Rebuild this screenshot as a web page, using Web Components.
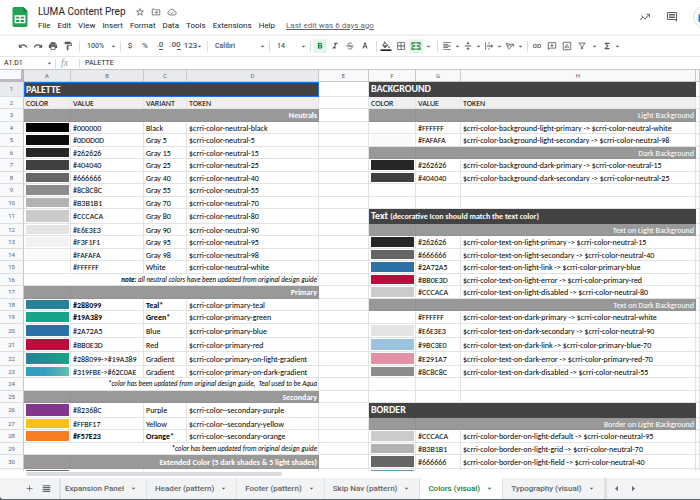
<!DOCTYPE html>
<html lang="en">
<head>
<meta charset="utf-8">
<title>LUMA Content Prep</title>
<style>
  html, body { height: 100%; }
  body {
    margin: 0;
    background: #5f6368;
    color: #202124;
    font: 8px/10px Roboto, "Liberation Sans", sans-serif;
    overflow: hidden;
  }
</style>
</head>
<body>
<sheets-app>
  <doc-header slot="header" name="LUMA Content Prep"></doc-header>
  <tool-bar slot="toolbar"></tool-bar>
  <formula-bar slot="formula" cell="A1:D1" value="PALETTE"></formula-bar>
  <sheet-grid></sheet-grid>
  <sheet-tabs slot="tabs">
    <sheet-tab>Expansion Panel</sheet-tab>
    <sheet-tab>Header (pattern)</sheet-tab>
    <sheet-tab>Footer (pattern)</sheet-tab>
    <sheet-tab>Skip Nav (pattern)</sheet-tab>
    <sheet-tab active>Colors (visual)</sheet-tab>
    <sheet-tab>Typography (visual)</sheet-tab>
  </sheet-tabs>
</sheets-app>

<script>
const stroke = 'fill="none" stroke="currentColor" stroke-width="2"';

const icons = {
  star: '<path d="M22 9.24l-7.19-.62L12 2 9.19 8.63 2 9.24l5.46 4.73L5.82 21 12 17.27 18.18 21l-1.63-7.03L22 9.24zM12 15.4l-3.76 2.27 1-4.28-3.32-2.88 4.38-.38L12 6.1l1.71 4.04 4.38.38-3.32 2.88 1 4.28L12 15.4z"/>',
  move: `<path ${stroke} d="M3 5h6l2 2h10v12H3zM8 13h7M12.500 9.500l3.500 3.500-3.500 3.500"/>`,
  cloud: `<path ${stroke} d="M7 19a5 5 0 0 1-.8-9.900 6.500 6.500 0 0 1 12.200 1.400A4.300 4.300 0 0 1 18.500 19zM8.500 13.500l2.500 2.500 4.500-4.500"/>`,
  trend: `<path ${stroke} d="M2 18l6-6 4 4 8-9M15 6.500h6v6M5 9l3 3"/>`,
  comments: '<path d="M22 4c0-1.100-.9-2-2-2H4c-1.100 0-2 .9-2 2v12c0 1.100.9 2 2 2h14l4 4zM20 4v13.170L18.830 16H4V4zM6 12h12v2H6zm0-3h12v2H6zm0-3h12v2H6z"/>',
  undo: '<path d="M12.500 8c-2.650 0-5.050.99-6.900 2.600L2 7v9h9l-3.620-3.620c1.390-1.160 3.160-1.880 5.120-1.880 3.540 0 6.550 2.310 7.600 5.500l2.370-.78C21.080 11.030 17.150 8 12.500 8z"/>',
  redo: '<path d="M18.400 10.600C16.550 8.990 14.150 8 11.500 8c-4.650 0-8.580 3.030-9.960 7.220L3.900 16c1.050-3.190 4.050-5.500 7.600-5.500 1.950 0 3.730.72 5.120 1.880L13 16h9V7l-3.600 3.600z"/>',
  print: '<path d="M19 8H5c-1.660 0-3 1.340-3 3v6h4v4h12v-4h4v-6c0-1.660-1.340-3-3-3zm-3 11H8v-5h8v5zm3-7c-.55 0-1-.45-1-1s.45-1 1-1 1 .45 1 1-.45 1-1 1zm-1-9H6v4h12V3z"/>',
  paint: '<path d="M18 4V3c0-.55-.45-1-1-1H5c-.55 0-1 .45-1 1v4c0 .55.45 1 1 1h12c.55 0 1-.45 1-1V6h1v4H9v11c0 .55.45 1 1 1h2c.55 0 1-.45 1-1v-9h8V4h-3z"/>',
  bold: '<path d="M15.600 10.790c.97-.67 1.650-1.770 1.650-2.790 0-2.260-1.750-4-4-4H7v14h7.040c2.090 0 3.710-1.700 3.710-3.790 0-1.520-.86-2.820-2.150-3.420zM10 6.500h3c.83 0 1.500.67 1.500 1.500s-.67 1.500-1.500 1.500h-3v-3zm3.500 9H10v-3h3.500c.83 0 1.500.67 1.500 1.500s-.67 1.500-1.500 1.500z"/>',
  italic: '<path d="M10 4v3h2.210l-3.420 8H6v3h8v-3h-2.210l3.420-8H18V4z"/>',
  strike: `<path ${stroke} d="M16.500 7.500C16 5.500 14.300 4.500 12 4.500c-2.600 0-4.500 1.300-4.500 3.200S9 10.300 12 11.500M12 12.500c3 .8 4.800 1.600 4.800 3.800 0 2-2 3.200-4.600 3.200-2.700 0-4.700-1.300-5-3.500M3 12h18"/>`,
  textcolor: '<path d="M11 3L5.500 18h2.700l1.100-3.200h5.400l1.100 3.200h2.700L13 3h-2zm-.9 9.500L12 6.900l1.900 5.600h-3.800z"/>',
  fill: '<path d="M16.560 8.940L7.620 0 6.210 1.410l2.380 2.380-5.150 5.150c-.59.59-.59 1.540 0 2.120l5.500 5.500c.29.290.68.440 1.060.440s.77-.15 1.060-.44l5.500-5.500c.59-.58.59-1.530 0-2.120zM5.210 10L10 5.210 14.790 10H5.210zM19 11.500s-2 2.170-2 3.500c0 1.100.9 2 2 2s2-.9 2-2c0-1.330-2-3.500-2-3.500z"/><path d="M-1 20h26v4H-1z" fill="#202124"/>',
  borders: '<path d="M3 3v18h18V3H3zm8 16H5v-6h6v6zm0-8H5V5h6v6zm8 8h-6v-6h6v6zm0-8h-6V5h6v6z"/>',
  merge: '<path d="M1 3h10v3H4v3H1zM13 3h10v6h-3V6h-7zM1 15h3v3h7v3H1zM20 15h3v6H13v-3h7zM1 11h5V8.500l5 3.500-5 3.500V13H1zM23 11h-5V8.500L13 12l5 3.500V13h5z"/>',
  align: '<path d="M3 3h18v2H3zm0 4h12v2H3zm0 4h18v2H3zm0 4h12v2H3zm0 4h18v2H3z"/>',
  valign: '<path d="M4 11h16v2H4zM11 1h2v4h3l-4 4-4-4h3zM11 23h2v-4h3l-4-4-4 4h3z"/>',
  wrap: '<path d="M3 3h2v18H3zM11 3h2v5h-2zM11 16h2v5h-2zM7 11h10V8l5 4-5 4v-3H7z"/>',
  rotate: `<path ${stroke} d="M3 5l13 5M3 5l5 13M6 13l7-5M9 20L20 8M15 7.500h5.500V13"/>`,
  link: '<path d="M3.900 12c0-1.710 1.390-3.100 3.100-3.100h4V7H7c-2.760 0-5 2.240-5 5s2.240 5 5 5h4v-1.900H7c-1.710 0-3.100-1.390-3.100-3.100zM8 13h8v-2H8v2zm9-6h-4v1.900h4c1.710 0 3.100 1.390 3.100 3.100s-1.390 3.100-3.100 3.100h-4V17h4c2.760 0 5-2.240 5-5s-2.240-5-5-5z"/>',
  addcomment: `<path ${stroke} d="M3 4h18v13H7l-4 4zM12 7v7M8.500 10.500h7"/>`,
  chart: `<path ${stroke} d="M3 3h18v18H3zM8 17v-6M12 17V7M16 17v-4"/>`,
  filter: `<path ${stroke} d="M4.500 5h15L13.500 12.500V19h-3v-6.500z"/>`,
  sigma: '<path d="M18 4H6v2l6.500 6L6 18v2h12v-3h-7l5-5-5-5h7z"/>',
  plus: '<path d="M20 13h-7v7h-2v-7H4v-2h7V4h2v7h7z"/>',
  list: '<path d="M2 3h20v3H2zm0 5h20v3H2zm0 5h20v3H2zm0 5h20v3H2z"/>',
  caret: '<path d="M3 8l9 9 9-9z"/>',
  prev: '<path d="M17 3L7 12l10 9z"/>',
  next: '<path d="M7 3l10 9L7 21z"/>',
  logo: '<path d="M3 2a2 2 0 0 1 2-2h11l5 5v17a2 2 0 0 1-2 2H5a2 2 0 0 1-2-2z" fill="#23a455"/><path d="M16 0l5 5h-5z" fill="#107c3c"/><path d="M5.500 10h13v9.500h-13zM7.200 11.600v2.300h4v-2.300zm5.600 0v2.300h4v-2.300zM7.200 15.500v2.400h4v-2.400zm5.600 0v2.400h4v-2.400z" fill="#fff" fill-rule="evenodd"/>',
  meet: '<path d="M1 8l6-6v6z" fill="#ea4335"/><path d="M1 8h6v8H1z" fill="#1a73e8"/><path d="M1 16h6v6H3a2 2 0 0 1-2-2z" fill="#1967d2"/><path d="M7 2h12v6H7z" fill="#fbbc04"/><path d="M7 16h12v6H7z" fill="#34a853"/>'
};

function define(name, html, setup) {
  const template = document.createElement('template');
  template.innerHTML = html;

  customElements.define(name, class extends HTMLElement {
    constructor() {
      super();
      this.attachShadow({ mode: 'open' }).appendChild(template.content.cloneNode(true));
    }

    connectedCallback() {
      if (setup) setup(this, this.shadowRoot);
    }
  });
}

define('ui-icon', `
<style>
  :host { display: inline-flex; flex: none; width: var(--size, 10px); height: var(--size, 10px); }
  svg { width: 100%; height: 100%; fill: currentColor; overflow: visible; }
</style>
<svg viewBox="0 0 24 24" aria-hidden="true"></svg>
`, (el, root) => {
  root.querySelector('svg').innerHTML = icons[el.getAttribute('name')];
});

define('sheets-app', `
<style>
  :host {
    display: flex;
    flex-direction: column;
    box-sizing: border-box;
    height: calc(100vh - 1px);
    background: #fff;
    border-bottom-left-radius: 4px;
    overflow: hidden;
  }
  main { flex: 1; min-height: 0; overflow: hidden; }
  .scroll { height: 7px; padding: 1px 0 0 26px; box-sizing: border-box; background: #fff; }
  .scroll div { width: 38%; height: 4px; border-radius: 2px; background: #dadce0; }
</style>
<slot name="header"></slot>
<slot name="toolbar"></slot>
<slot name="formula"></slot>
<main><slot></slot></main>
<div class="scroll"><div></div></div>
<slot name="tabs"></slot>
`);

define('doc-header', `
<style>
  :host {
    display: flex;
    align-items: center;
    gap: 8px;
    height: 34px;
    padding-left: 10px;
    border-bottom: 2px solid #eeeff0;
    overflow: hidden;
  }
  .logo { --size: 20px; }
  .doc { flex: 1; display: flex; flex-direction: column; gap: 2px; padding-top: 2px; }
  .title { display: flex; align-items: center; gap: 6px; color: #5f6368; }
  h1 { margin: 0 3px 0 0; font: 10px/14px Roboto, sans-serif; color: #202124; }
  nav { display: flex; gap: 7px; }
  button { padding: 0; border: 0; background: none; color: inherit; font: inherit; display: flex; }
  a { margin-left: 4px; color: #5f6368; }
  .tools { display: flex; align-items: center; gap: 15px; margin-right: -15px; color: #5f6368; --size: 12px; }
  .meet { align-items: center; padding: 4px; border: 1px solid #dadce0; border-radius: 50%; }
</style>
<ui-icon class="logo" name="logo"></ui-icon>
<div class="doc">
  <div class="title">
    <h1></h1>
    <button aria-label="Star"><ui-icon name="star"></ui-icon></button>
    <button aria-label="Move"><ui-icon name="move"></ui-icon></button>
    <button aria-label="See document status"><ui-icon name="cloud"></ui-icon></button>
  </div>
  <nav>
    <button>File</button>
    <button>Edit</button>
    <button>View</button>
    <button>Insert</button>
    <button>Format</button>
    <button>Data</button>
    <button>Tools</button>
    <button>Extensions</button>
    <button>Help</button>
    <a href="#history">Last edit was 6 days ago</a>
  </nav>
</div>
<div class="tools">
  <button aria-label="Activity"><ui-icon name="trend"></ui-icon></button>
  <button aria-label="Comments"><ui-icon name="comments"></ui-icon></button>
  <button class="meet" aria-label="Join a call"><ui-icon name="meet"></ui-icon></button>
</div>
`, (el, root) => {
  root.querySelector('h1').textContent = el.getAttribute('name');
});

define('tool-button', `
<style>
  :host { display: flex; flex: none; width: 14px; --size: 10px; }
  :host([menu]) { width: auto; }
  button {
    flex: 1;
    display: flex;
    align-items: center;
    justify-content: center;
    height: 14px;
    padding: 0;
    border: 0;
    background: none;
    color: #55585c;
    font: 500 8px/10px Roboto, sans-serif;
  }
  :host([active]) button { background: #e6f4ea; color: #188038; }
</style>
<button><slot></slot></button>
`, (el, root) => {
  const name = el.getAttribute('icon');
  root.querySelector('button').setAttribute('aria-label', el.getAttribute('label') || name || el.textContent);
  if (name) {
    root.querySelector('slot').innerHTML = `<ui-icon name="${name}"></ui-icon>`;
  }
});

define('tool-select', `
<style>
  :host { display: block; flex: none; }
  label { display: flex; align-items: center; padding-left: 5px; color: #55585c; --size: 5px; }
  select {
    appearance: none;
    flex: 1;
    min-width: 0;
    padding: 0;
    border: 0;
    background: none;
    color: inherit;
    font: 500 7px/10px Roboto, sans-serif;
  }
</style>
<label><select></select><ui-icon name="caret"></ui-icon></label>
`, (el, root) => {
  const select = root.querySelector('select');
  select.setAttribute('aria-label', el.getAttribute('label'));
  select.innerHTML = `<option>${el.getAttribute('value')}</option>`;
});

define('tool-bar', `
<style>
  :host {
    display: flex;
    align-items: center;
    gap: 1px;
    height: 20px;
    padding-left: 16px;
    border-bottom: 1px solid #e3e5e8;
    overflow: hidden;
  }
  hr { flex: none; width: 1px; height: 11px; margin: 0 1px 0 3px; border: 0; background: #dadce0; }
  .caret { width: 5px; --size: 5px; }
  .roomy { width: 9px; }
  .zoom { width: 34px; }
  .font { width: 55px; }
  .size { width: 34px; }
  .format { width: 20px; }
  .decimals { display: flex; flex-direction: column; align-items: flex-end; line-height: 6px; }
  .arrow { width: 4px; height: 1px; margin-top: 1px; background: currentColor; }
  ui-icon { --size: 5px; }
</style>
<tool-button icon="undo"></tool-button>
<tool-button icon="redo"></tool-button>
<tool-button icon="print"></tool-button>
<tool-button icon="paint"></tool-button>
<hr>
<tool-select class="zoom" label="Zoom" value="100%"></tool-select>
<hr>
<tool-button>$</tool-button>
<tool-button>%</tool-button>
<tool-button><span class="decimals">.0<i class="arrow"></i></span></tool-button>
<tool-button><span class="decimals">.00<i class="arrow"></i></span></tool-button>
<tool-button menu class="format">123<ui-icon name="caret"></ui-icon></tool-button>
<hr>
<tool-select class="font" label="Font" value="Calibri"></tool-select>
<hr>
<tool-select class="size" label="Font size" value="14"></tool-select>
<hr>
<tool-button icon="bold" active></tool-button>
<tool-button icon="italic"></tool-button>
<tool-button icon="strike"></tool-button>
<tool-button icon="textcolor"></tool-button>
<hr>
<tool-button icon="fill"></tool-button>
<tool-button icon="borders"></tool-button>
<tool-button icon="merge" active></tool-button>
<tool-button class="caret roomy" icon="caret" label="Merge options"></tool-button>
<hr>
<tool-button icon="align"></tool-button>
<tool-button class="caret" icon="caret" label="Horizontal align options"></tool-button>
<tool-button icon="valign"></tool-button>
<tool-button class="caret" icon="caret" label="Vertical align options"></tool-button>
<tool-button icon="wrap"></tool-button>
<tool-button class="caret" icon="caret" label="Wrapping options"></tool-button>
<tool-button icon="rotate"></tool-button>
<tool-button class="caret" icon="caret" label="Rotation options"></tool-button>
<hr>
<tool-button icon="link"></tool-button>
<tool-button icon="addcomment"></tool-button>
<tool-button icon="chart"></tool-button>
<tool-button icon="filter"></tool-button>
<tool-button class="caret roomy" icon="caret" label="Filter views"></tool-button>
<tool-button icon="sigma"></tool-button>
<tool-button class="caret" icon="caret" label="Functions"></tool-button>
`);

define('formula-bar', `
<style>
  :host { display: flex; align-items: center; height: 12px; padding-left: 4px; }
  input { padding: 0; border: 0; outline: 0; background: none; color: #202124; font: 7px/10px Roboto, sans-serif; }
  .name { width: 43px; }
  .value { flex: 1; min-width: 0; }
  button { display: flex; padding: 0; border: 0; background: none; color: #5f6368; --size: 5px; }
  hr { width: 1px; height: 9px; margin: 0 5px 0 3px; border: 0; background: #dadce0; }
  i { width: 15px; font: italic 10px/10px "Liberation Serif", serif; color: #9aa0a6; }
</style>
<input class="name" aria-label="Name box">
<button aria-label="Named ranges"><ui-icon name="caret"></ui-icon></button>
<hr>
<i>fx</i>
<hr>
<input class="value" aria-label="Formula">
`, (el, root) => {
  root.querySelector('.name').value = el.getAttribute('cell');
  root.querySelector('.value').value = el.getAttribute('value');
});

// one builder for each kind of block in a row
const title = (text, note = '') => ({ kind: 'title', text, note });
const labels = () => ({ kind: 'labels' });
const section = (text, bold) => ({ kind: 'section', text, bold });
const note = (text, lead = '') => ({ kind: 'note', text, lead });
const color = (value, name, token, bold) => ({ kind: 'color', fill: value, value, name, token, bold });
const blend = (value, fill, token) => ({ kind: 'color', fill, value, name: 'Gradient', token });
const token = (value, from, to) => ({ kind: 'color', fill: value, value, token: `$crri-color-${from} -> $crri-color-${to}` });
const sliver = (fill) => ({ kind: 'color', fill, value: '', name: '', token: '' });

const rows = [
  [15, title('PALETTE'), title('BACKGROUND')],
  [12, labels(), labels()],
  [13, section('Neutrals', true), section('Light Background')],
  [12, color('#000000', 'Black', 'neutral-black'), token('#FFFFFF', 'background-light-primary', 'neutral-white')],
  [13, color('#0D0D0D', 'Gray 5', 'neutral-5'), token('#FAFAFA', 'background-light-secondary', 'neutral-98')],
  [12, color('#262626', 'Gray 15', 'neutral-15'), section('Dark Background')],
  [13, color('#404040', 'Gray 25', 'neutral-25'), token('#262626', 'background-dark-primary', 'neutral-15')],
  [12, color('#666666', 'Gray 40', 'neutral-40'), token('#404040', 'background-dark-secondary', 'neutral-25')],
  [13, color('#8C8C8C', 'Gray 55', 'neutral-55')],
  [12, color('#B3B1B1', 'Gray 70', 'neutral-70')],
  [15, color('#CCCACA', 'Gray 80', 'neutral-80'), title('Text', '(decorative Icon should match the text color)')],
  [12, color('#E6E3E3', 'Gray 90', 'neutral-90'), section('Text on Light Background')],
  [13, color('#F3F1F1', 'Gray 95', 'neutral-95'), token('#262626', 'text-on-light-primary', 'neutral-15')],
  [12, color('#FAFAFA', 'Gray 98', 'neutral-98'), token('#666666', 'text-on-light-secondary', 'neutral-40')],
  [13, color('#FFFFFF', 'White', 'neutral-white'), token('#2A72A5', 'text-on-light-link', 'primary-blue')],
  [12, note('all neutral colors have been updated from original design guide', 'note:'), token('#BB0E3D', 'text-on-light-error', 'primary-red')],
  [13, section('Primary', true), token('#CCCACA', 'text-on-light-disabled', 'neutral-80')],
  [12, color('#288099', 'Teal*', 'primary-teal', true), section('Text on Dark Background')],
  [13, color('#19A389', 'Green*', 'primary-green', true), token('#FFFFFF', 'text-on-dark-primary', 'neutral-white')],
  [14, color('#2A72A5', 'Blue', 'primary-blue'), token('#E6E3E3', 'text-on-dark-secondary', 'neutral-90')],
  [14, color('#BB0E3D', 'Red', 'primary-red'), token('#9BC3E0', 'text-on-dark-link', 'primary-blue-70')],
  [14, blend('#288099->#19A389', 'linear-gradient(90deg, #288099, #19A389)', 'primary-on-light-gradient'), token('#E291A7', 'text-on-dark-error', 'primary-red-70')],
  [12, blend('#319FBE->#62C0AE', 'linear-gradient(90deg, #319FBE 40%, #62C0AE)', 'primary-on-dark-gradient'), token('#8C8C8C', 'text-on-dark-disabled', 'neutral-55')],
  [13, note('color has been updated from original design guide,\u00a0 Teal used to be Aqua', '*')],
  [12, section('Secondary', true)],
  [15, color('#82368C', 'Purple', '-secondary-purple'), title('BORDER')],
  [12, color('#FFBF17', 'Yellow', '-secondary-yellow'), section('Border on Light Background')],
  [13, color('#F57E23', 'Orange*', '-secondary-orange', true), token('#CCCACA', 'border-on-light-default', 'neutral-95')],
  [12, note('color has been updated from original design guide', '*'), token('#B3B1B1', 'border-on-light-grid', 'neutral-70')],
  [14, section('Extended Color (5 dark shades & 5 light shades)', true), token('#666666', 'border-on-light-field', 'neutral-40')],
  [13, sliver('#5d6b7a'), sliver('#4f9dbd')]
];

function cells(block, wide) {
  // the palette has four columns, the usage tables have three
  const span = wide ? 4 : 3;
  if (!block) return '<td></td>'.repeat(span);

  switch (block.kind) {
    case 'title':
      return `<td class="title${block.text === 'PALETTE' ? ' selected' : ''}" colspan="${span}"><b>${block.text}</b>${block.note ? ` <small>${block.note}</small>` : ''}</td>`;
    case 'labels':
      return ['COLOR', 'VALUE', ...(wide ? ['VARIANT'] : []), 'TOKEN'].map((t) => `<td class="label">${t}</td>`).join('');
    case 'section':
      return `<td class="section"></td><td class="section${block.bold ? ' bold' : ''}" colspan="${span - 1}">${block.text.replace('&', '&amp;')}</td>`;
    case 'note':
      return `<td class="note" colspan="${span}"><b>${block.lead}</b>${block.lead === '*' ? '' : ' '}${block.text}</td>`;
  }

  const bold = block.bold ? ' class="bold"' : '';
  const value = block.value.replace('>', '&gt;');
  const full = wide && block.token ? `$crri-color-${block.token}` : block.token.replace('>', '&gt;');
  return `<td><div class="swatch" style="background: ${block.fill}"></div></td><td${bold}>${value}</td>` +
    (wide ? `<td${bold}>${block.name}</td>` : '') + `<td>${full}</td>`;
}

define('sheet-grid', `
<style>
  :host { display: block; font: 8px/10px Carlito, Lato, "Open Sans", sans-serif; color: #000; }
  table { width: 100%; table-layout: fixed; border-collapse: separate; border-spacing: 0; }
  th, td {
    box-sizing: border-box;
    padding: 0;
    border: 0 solid #e2e3e3;
    border-width: 0 1px 1px 0;
    overflow: hidden;
    white-space: nowrap;
    text-align: left;
  }
  td { padding-left: 2px; }
  th {
    background: #f8f9fa;
    border-color: #c6c8ca;
    color: #5f6368;
    font: 6px/8px Roboto, sans-serif;
    text-align: center;
  }
  thead th { height: 13px; border-top-width: 1px; }
  tbody th { border-bottom-color: #dcdee0; }
  th.on { background: #e8eaed; }
  thead th:first-child { border-right: 3px solid #b7b9bc; border-bottom: 3px solid #b7b9bc; }
  .h12 { height: 12px; }
  .h13 { height: 13px; }
  .h14 { height: 14px; }
  .h15 { height: 15px; }
  .swatch { margin-right: 1px; }
  .h12 .swatch { height: 9px; }
  .h13 .swatch { height: 10px; }
  .h14 .swatch { height: 11px; }
  .h15 .swatch { height: 12px; }
  .bold, b { font-weight: 700; }
  .title { background: #434343; border-color: #434343; color: #fff; font-size: 10px; }
  .title small { font-size: 8px; font-weight: 700; }
  .selected { border: 1px solid #1a73e8; padding-left: 1px; }
  .label { background: #efefef; border-color: #e6e6e6; }
  .section { background: #999; border-color: #919191; color: #fff; text-align: right; padding-right: 1px; }
  .note { text-align: right; font-size: 7px; font-style: italic; padding-right: 1px; }
</style>
<table>
  <colgroup>
    <col style="width: 24px"><col style="width: 47px"><col style="width: 73px"><col style="width: 43px">
    <col style="width: 132px"><col style="width: 50px"><col style="width: 47px"><col style="width: 45px">
    <col style="width: 235px"><col>
  </colgroup>
  <thead><tr></tr></thead>
  <tbody></tbody>
</table>
`, (el, root) => {
  root.querySelector('thead tr').innerHTML = '<th></th>' +
    [...'ABCDEFGH'].map((c) => `<th${c < 'E' ? ' class="on"' : ''}>${c}</th>`).join('') + '<th></th>';

  root.querySelector('tbody').innerHTML = rows.map(([height, left, right], i) =>
    `<tr class="h${height}"><th${i === 0 ? ' class="on"' : ''}>${i < 30 ? i + 1 : ''}</th>` +
    `${cells(left, true)}<td></td>${cells(right, false)}<td></td></tr>`
  ).join('');
});

define('sheet-tab', `
<style>
  :host { display: flex; flex: none; border-right: 1px solid #e0e2e4; }
  button {
    display: flex;
    align-items: center;
    gap: 7px;
    padding: 0 10px 0 8px;
    border: 0;
    background: none;
    color: #5f6368;
    font: 500 8px/10px Roboto, sans-serif;
    --size: 5px;
  }
  :host([active]) { background: #fff; }
  :host([active]) button { color: #188038; }
</style>
<button><slot></slot><ui-icon name="caret"></ui-icon></button>
`);

define('sheet-tabs', `
<style>
  :host { display: flex; height: 21px; background: #f1f3f4; overflow: hidden; }
  ::slotted(sheet-tab:first-child) { margin-left: -4px; }
  button { display: flex; align-items: center; padding: 0; border: 0; background: none; color: #5f6368; }
  .start, .end { display: flex; flex: none; gap: 8px; --size: 9px; }
  .start { padding: 0 8px 0 25px; border-right: 2px solid #dcdee0; }
  .end { gap: 10px; padding-left: 6px; border-left: 2px solid #dcdee0; --size: 7px; }
</style>
<div class="start">
  <button aria-label="Add sheet"><ui-icon name="plus"></ui-icon></button>
  <button aria-label="All sheets"><ui-icon name="list"></ui-icon></button>
</div>
<slot></slot>
<div class="end">
  <button aria-label="Scroll left"><ui-icon name="prev"></ui-icon></button>
  <button aria-label="Scroll right"><ui-icon name="next"></ui-icon></button>
</div>
`);
</script>
</body>
</html>
